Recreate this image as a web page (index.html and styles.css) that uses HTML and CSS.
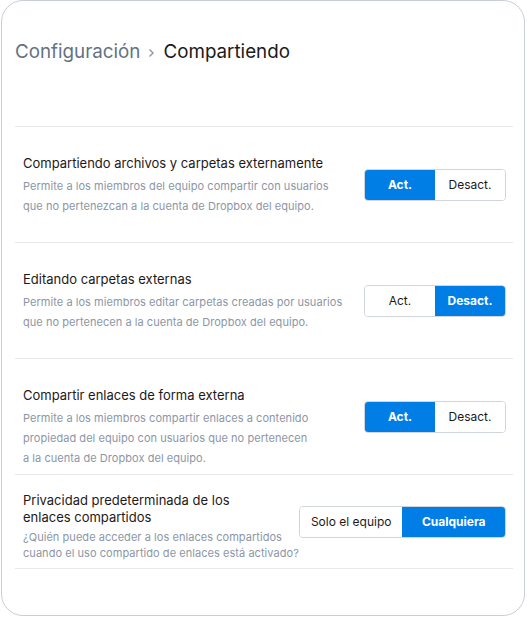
FILE: index.html
```html
<!DOCTYPE html>
<html lang="es">
<head>
    <meta charset="UTF-8">
    <meta name="viewport" content="width=device-width, initial-scale=1.0">
    <title>Compartiendo</title>
    <link rel="stylesheet" href="styles.css">
</head>
<body>
    <div class="panel">
        <div class="crumbs">
            <span class="crumb-parent">Configuración</span>
            <svg class="chevron" width="7" height="10" viewBox="0 0 7 10"><path d="M1.5 1.5 L5 5 L1.5 8.5" fill="none" stroke="#8c96a5" stroke-width="1.4"/></svg>
            <span class="crumb-current">Compartiendo</span>
        </div>

        <div class="setting">
            <div class="setting-text">
                <div class="setting-title">Compartiendo archivos y carpetas externamente</div>
                <div class="setting-desc">Permite a los miembros del equipo compartir con usuarios<br>que no pertenezcan a la cuenta de Dropbox del equipo.</div>
            </div>
            <div class="toggle">
                <span class="opt on">Act.</span><span class="opt">Desact.</span>
            </div>
        </div>

        <div class="setting">
            <div class="setting-text">
                <div class="setting-title">Editando carpetas externas</div>
                <div class="setting-desc">Permite a los miembros editar carpetas creadas por usuarios<br>que no pertenecen a la cuenta de Dropbox del equipo.</div>
            </div>
            <div class="toggle">
                <span class="opt">Act.</span><span class="opt on">Desact.</span>
            </div>
        </div>

        <div class="setting">
            <div class="setting-text">
                <div class="setting-title">Compartir enlaces de forma externa</div>
                <div class="setting-desc">Permite a los miembros compartir enlaces a contenido<br>propiedad del equipo con usuarios que no pertenecen<br>a la cuenta de Dropbox del equipo.</div>
            </div>
            <div class="toggle">
                <span class="opt on">Act.</span><span class="opt">Desact.</span>
            </div>
        </div>

        <div class="setting setting-compact">
            <div class="setting-text">
                <div class="setting-title">Privacidad predeterminada de los<br>enlaces compartidos</div>
                <div class="setting-desc">¿Quién puede acceder a los enlaces compartidos<br>cuando el uso compartido de enlaces está activado?</div>
            </div>
            <div class="toggle">
                <span class="opt">Solo el equipo</span><span class="opt on">Cualquiera</span>
            </div>
        </div>
    </div>
</body>
</html>
```

FILE: styles.css
```css
body { margin: 0; background: #fff; font-family: Inter, "Open Sans", sans-serif; }
.panel { box-sizing: border-box; width: 524px; height: 616px; margin-left: 1px; padding: 39px 11px 0 13px; border: 1px solid #c9ced7; border-radius: 22px; background: #fff; }

.crumbs { display: flex; align-items: center; gap: 8px; font-size: 18.8px; line-height: 24px; margin-bottom: 62px; }
.crumb-parent { color: #637282; }
.crumb-current { color: #1e1919; }
.chevron { margin-top: 1px; }

.setting { box-sizing: border-box; display: flex; align-items: center; justify-content: space-between; height: 116px; padding: 0 7px 0 8px; border-top: 1px solid #e6e8eb; }
.setting-text { align-self: flex-start; padding-top: 26px; }
.setting-title { font-size: 13px; line-height: 20px; color: #1e1919; margin-bottom: 3px; }
.setting-desc { font-size: 11px; letter-spacing: 0.05px; line-height: 20px; color: #8c96a5; }

.setting-compact { height: auto; padding-top: 17px; padding-bottom: 7px; border-bottom: 1px solid #e6e8eb; }
.setting-compact .setting-text { align-self: auto; padding-top: 0; }
.setting-compact .setting-title { line-height: 17px; margin-bottom: 3px; }
.setting-compact .setting-desc { line-height: 16px; }
.setting-compact .toggle { margin-bottom: 10px; }

.toggle { display: grid; grid-auto-columns: minmax(70px, 1fr); grid-auto-flow: column; height: 30px; border: 1px solid #d0d5dd; border-radius: 4px; overflow: hidden; }
.opt { display: flex; align-items: center; justify-content: center; padding: 0 11px; font-size: 12px; color: #1e1919; background: #fff; }
.opt.on { background: #007ee5; color: #fff; font-weight: bold; }
```
